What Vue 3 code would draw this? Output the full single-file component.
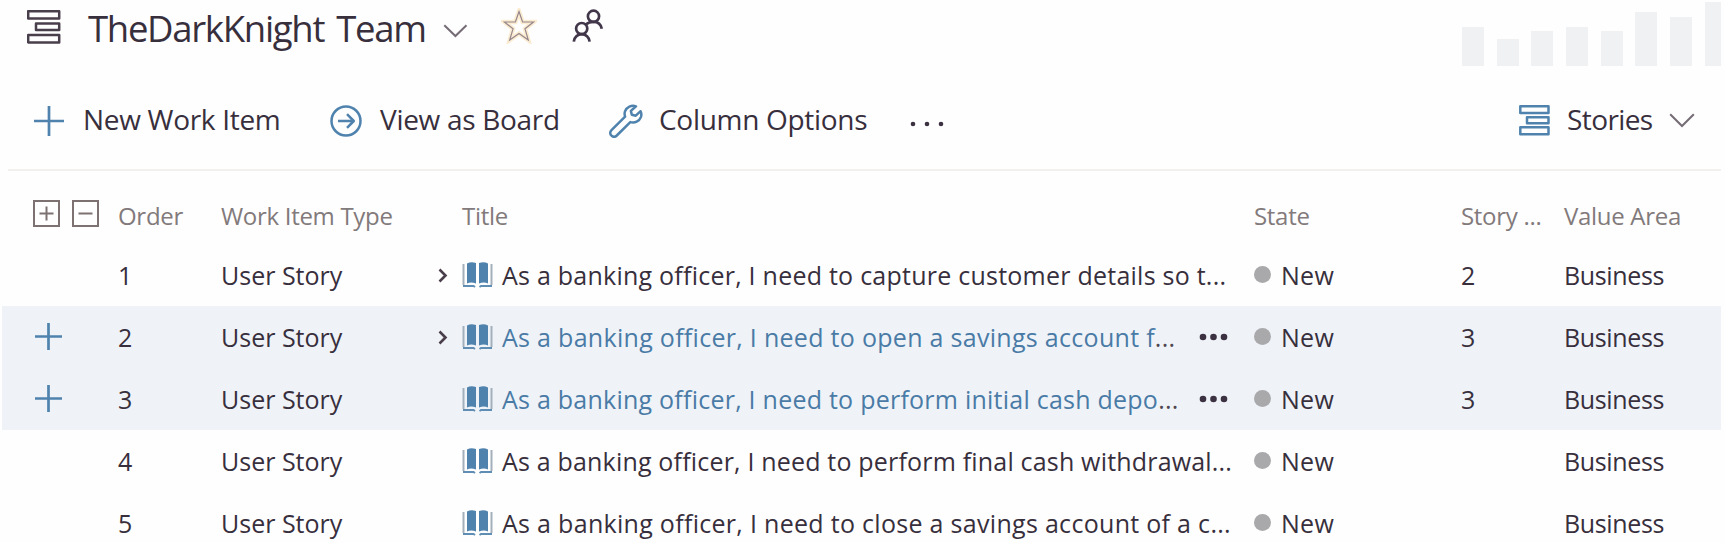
<script setup>
const bars = [39.5, 27, 35, 39.5, 35, 54, 49, 64]
const rows = [
  { order: 1, title: 'As a banking officer, I need to capture customer details so t...', cls: 't1', expand: true, points: '2' },
  { order: 2, title: 'As a banking officer, I need to open a savings account f', cls: 't2', expand: true, points: '3', selected: true },
  { order: 3, title: 'As a banking officer, I need to perform initial cash depo', cls: 't3', points: '3', selected: true },
  { order: 4, title: 'As a banking officer, I need to perform final cash withdrawal...', cls: 't4' },
  { order: 5, title: 'As a banking officer, I need to close a savings account of a c...', cls: 't5' }
]
</script>

<template>
  <main class="page">
    <header class="head">
      <svg class="backlog" width="34" height="34" viewBox="0 0 34 34">
        <path d="M1.2 1.2h31v7.4h-31zM9 13.5h23.2v6.6H9zM1.2 25h31v7.4h-31z" />
      </svg>
      <h1>TheDarkKnight Team</h1>
      <svg class="chev title-chev" width="25" height="14" viewBox="0 0 25 14"><path d="M1.3 1.2 12.4 12 23.5 1.2" /></svg>
      <svg class="star" width="36" height="36" viewBox="0 0 36 36">
        <path class="halo" d="M18 3.5 21.6 14H32.5L24 20.8 27.3 32 18 25.4 8.7 32 12 20.8 3.5 14H14.4Z" />
        <path class="edge" d="M18 3.5 21.6 14H32.5L24 20.8 27.3 32 18 25.4 8.7 32 12 20.8 3.5 14H14.4Z" />
      </svg>
      <svg class="people" width="32" height="34" viewBox="0 0 32 34">
        <circle cx="21.5" cy="7.3" r="5.6" /><circle cx="9.7" cy="19.6" r="5.6" />
        <path d="M1.800 32.600c.4-4.300 3.800-7.400 7.900-7.400s7.500 3.100 7.900 7.400M13.800 15.600c2-1.800 4.500-2.800 7.700-2.800 4.400 0 7.500 2.800 8.300 7" />
      </svg>
      <div class="velocity"><i v-for="(b, i) in bars" :key="i" :style="{ height: b + 'px' }"></i></div>
    </header>

    <nav class="tools">
      <svg class="plus" width="30" height="30" viewBox="0 0 30 30"><path d="M15 0v30M0 15h30" /></svg>
      <span class="label l1">New Work Item</span>
      <svg class="line" width="32" height="32" viewBox="0 0 32 32"><circle cx="16" cy="16" r="14.5" /><path d="M8 16h15.500M17 9.200 23.800 16 17 22.800" /></svg>
      <span class="label l2">View as Board</span>
      <svg class="line wrench" width="34" height="34" viewBox="0 0 34 34">
        <path d="M27 2.300C22.500.6 17.500 3 16 7.300c-.6 1.900-.5 3.700.1 5.300L2.500 26.200c-1.700 1.700-1.700 4 0 5.400 1.600 1.500 3.700 1.500 5.300-.1l13.500-13.400c4.500 1.400 9-.8 10.600-5 .7-2 .6-4-.3-5.900l-4.800 4.500-4-.9-.9-3.900Z" />
      </svg>
      <span class="label l3">Column Options</span>
      <svg class="dots" width="34" height="6" viewBox="0 0 34 6"><circle cx="3" cy="3" r="2.300" /><circle cx="17" cy="3" r="2.300" /><circle cx="31" cy="3" r="2.300" /></svg>
      <svg class="backlog blue" width="31" height="31" viewBox="0 0 31 31">
        <path d="M1.300 1.300h28.200v6.800H1.300zM8 12.200h21.500v6H8zM1.300 22.300h28.200v6.900H1.300z" />
      </svg>
      <span class="label l4">Stories</span>
      <svg class="chev" width="26" height="15" viewBox="0 0 26 15"><path d="M1.200 1.200 13 13 24.800 1.200" /></svg>
    </nav>

    <section class="grid">
      <div class="row columns">
        <span class="gutter boxes">
          <svg width="27" height="27" viewBox="0 0 27 27"><path d="M1 1h25v25H1zM6.500 13.500h14M13.500 6.500v14" /></svg>
          <svg width="27" height="27" viewBox="0 0 27 27"><path d="M1 1h25v25H1zM6.500 13.500h14" /></svg>
        </span>
        <span>Order</span><span>Work Item Type</span><span></span>
        <span>Title</span><span>State</span><span>Story ...</span><span>Value Area</span>
      </div>
      <div v-for="r in rows" :key="r.order" class="row" :class="{ selected: r.selected }">
        <span class="gutter"><svg v-if="r.selected" class="plus" width="27" height="27" viewBox="0 0 27 27"><path d="M13.500 0v27M0 13.500h27" /></svg></span>
        <span>{{ r.order }}</span>
        <span class="type">User Story</span>
        <span class="arrow"><svg v-if="r.expand" width="10" height="15" viewBox="0 0 10 15"><path d="m1.500 1.500 6 6-6 6" /></svg></span>
        <span class="title">
          <svg class="book" width="31" height="27" viewBox="0 0 31 27">
            <path class="pages" d="M5 2.500Q9 .2 14 2v20.500Q9 20.500 5 22.500zM17 2q5-1.800 9 .5v20q-4-2-9 0z" />
            <path class="side" d="M1.500 3v21M29.500 3v21" />
            <path class="cover" d="M1 25H11.500l1.500 1M30 25H19l-1.500 1" />
          </svg>
          <span class="name" :class="r.cls">{{ r.title }}<b v-if="r.selected">...</b></span>
          <svg v-if="r.selected" class="dots more" width="30" height="8" viewBox="0 0 30 8"><circle cx="4" cy="4" r="3.300" /><circle cx="14.500" cy="4" r="3.300" /><circle cx="25" cy="4" r="3.300" /></svg>
        </span>
        <span class="state"><i></i><span>New</span></span>
        <span>{{ r.points }}</span>
        <span class="area">Business</span>
      </div>
    </section>
  </main>
</template>

<style>
body { margin: 0; background: #fefefe; }
</style>

<style scoped>
.page { width: 1725px; height: 543px; overflow: hidden; font-family: "Open Sans", "Noto Sans", sans-serif; color: #382f3d; white-space: nowrap; }
svg { display: block; flex: none; fill: none; }
.head { height: 66px; padding-left: 27px; display: flex; align-items: flex-start; }
.backlog { margin-top: 10px; stroke: #493e4b; stroke-width: 2.500; stroke-linejoin: round; }
h1 { margin: 3px 0 0 27px; width: 355px; flex: none; font-size: 36.500px; line-height: 50px; font-weight: 400; letter-spacing: -1.300px; word-spacing: 4px; }
.chev { stroke: #756c76; stroke-width: 2; }
.title-chev { margin-top: 24px; }
.star { margin: 8px 0 0 33px; }
.halo { stroke: #fbecd1; stroke-width: 4.500; }
.edge { stroke: #94868c; stroke-width: 1.200; }
.people { margin: 9px 0 0 35px; stroke: #41364a; stroke-width: 2.700; }
.velocity { margin-left: auto; width: 263px; height: 66px; display: flex; align-items: flex-end; gap: 12.700px; overflow: hidden; box-sizing: border-box; border-right: 4px solid transparent; }
.velocity i { width: 22px; flex: none; background: #f0f1f3; }
.tools { height: 103px; margin: 0 4px 0 8px; padding-left: 26px; display: flex; align-items: center; border-bottom: 2px solid #f2f0ee; }
.tools > svg { position: relative; top: 3px; }
.plus { stroke: #4f83ae; stroke-width: 2.700; }
.line { stroke: #4f83ae; stroke-width: 2.500; stroke-linejoin: round; }
.label { font-size: 28px; line-height: 38px; margin: 2px 0 0 19px; flex: none; letter-spacing: -.3px; }
.l1 { width: 247px; }
.l2 { width: 229px; margin-left: 18px; }
.l3 { width: 251px; margin-left: 16px; letter-spacing: -.3px; }
.dots { fill: #3b3140; }
.tools > .dots { top: 6px; }
.blue { stroke: #4f83ae; margin: 0 0 0 auto; }
.l4 { width: 102px; margin-left: 17px; letter-spacing: -.6px; }
.tools > .chev:last-child { margin-right: 26px; }
.row { display: grid; grid-template-columns: 116px 103px 216px 25px 792px 207px 103px 1fr; height: 62px; align-items: center; margin: 0 4px 0 2px; font-size: 25px; line-height: 34px; }
.columns { height: 73px; color: #827a7b; font-size: 24px; letter-spacing: -.3px; }
.columns > span { position: relative; top: 8px; }
.gutter { padding-left: 33px; }
.boxes { display: flex; gap: 12px; padding-left: 31px; }
.columns > .boxes { top: 6px; }
.boxes svg { stroke: #7d7271; stroke-width: 2; }
.selected { background: #eff3f8; }
.selected .plus { position: relative; top: -1px; }
.arrow svg { stroke: #4a3e4a; stroke-width: 2.600; margin-left: 1px; }
.title { display: flex; align-items: center; position: relative; }
.book { margin-right: 9px; position: relative; top: -1px; }
.pages { fill: #4f83ae; }
.side { stroke: #a3afbb; stroke-width: 2; }
.cover { stroke: #5f8db4; stroke-width: 2; }
.selected .name { color: #4a7ba6; }
.name b { font-weight: 400; color: #514751; }
.t1 { letter-spacing: .240px; }
.t2 { letter-spacing: .295px; }
.t3 { letter-spacing: .240px; }
.t4 { letter-spacing: .185px; }
.t5 { letter-spacing: .300px; }
.more { position: absolute; left: 737px; }
.state { display: flex; align-items: center; letter-spacing: .3px; }
.state i { width: 17px; height: 17px; border-radius: 50%; background: #a9a9ac; margin: -2px 10px 0 0; }
.area { letter-spacing: -.35px; }
</style>
